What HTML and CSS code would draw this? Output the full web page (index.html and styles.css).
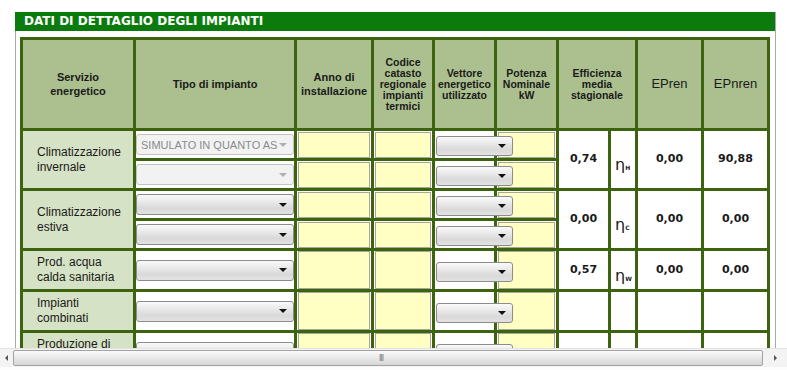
FILE: index.html
```html
<!DOCTYPE html>
<html lang="it">
<head>
  <meta charset="UTF-8">
  <title>Dati di dettaglio degli impianti</title>
  <link rel="stylesheet" href="styles.css">
</head>
<body>
  <div class="viewport">
    <div class="panel">
      <div class="panel-title">DATI DI DETTAGLIO DEGLI IMPIANTI</div>

      <table class="grid">
        <colgroup>
          <col style="width:113px">
          <col style="width:161px">
          <col style="width:77px">
          <col style="width:61px">
          <col style="width:62px">
          <col style="width:62px">
          <col style="width:52px">
          <col style="width:27px">
          <col style="width:66px">
          <col style="width:66px">
        </colgroup>
        <tr class="head">
          <th>Servizio<br>energetico</th>
          <th>Tipo di impianto</th>
          <th>Anno di<br>installazione</th>
          <th class="tight">Codice<br>catasto<br>regionale<br>impianti<br>termici</th>
          <th class="tight">Vettore<br>energetico<br>utilizzato</th>
          <th class="tight">Potenza<br>Nominale<br>kW</th>
          <th colspan="2" class="tight">Efficienza<br>media<br>stagionale</th>
          <th class="big">EPren</th>
          <th class="big">EPnren</th>
        </tr>

        <!-- climatizzazione invernale -->
        <tr class="sub">
          <td rowspan="2" class="service">Climatizzazione<br>invernale</td>
          <td class="tipo"><div class="dd off"><span class="dd-text">SIMULATO IN QUANTO AS</span><span class="dd-arrow"></span></div></td>
          <td class="field"><div class="inp"></div></td>
          <td class="field"><div class="inp"></div></td>
          <td class="vett"><div class="dd small"><span class="dd-text"></span><span class="dd-arrow"></span></div></td>
          <td class="field"><div class="inp"></div></td>
          <td rowspan="2" class="val">0,74</td>
          <td rowspan="2" class="eta">η<sub>H</sub></td>
          <td rowspan="2" class="val">0,00</td>
          <td rowspan="2" class="val">90,88</td>
        </tr>
        <tr class="sub">
          <td class="tipo"><div class="dd off"><span class="dd-text"></span><span class="dd-arrow"></span></div></td>
          <td class="field"><div class="inp"></div></td>
          <td class="field"><div class="inp"></div></td>
          <td class="vett"><div class="dd small"><span class="dd-text"></span><span class="dd-arrow"></span></div></td>
          <td class="field"><div class="inp"></div></td>
        </tr>

        <!-- climatizzazione estiva -->
        <tr class="sub">
          <td rowspan="2" class="service">Climatizzazione<br>estiva</td>
          <td class="tipo"><div class="dd"><span class="dd-text"></span><span class="dd-arrow"></span></div></td>
          <td class="field"><div class="inp"></div></td>
          <td class="field"><div class="inp"></div></td>
          <td class="vett"><div class="dd small"><span class="dd-text"></span><span class="dd-arrow"></span></div></td>
          <td class="field"><div class="inp"></div></td>
          <td rowspan="2" class="val">0,00</td>
          <td rowspan="2" class="eta">η<sub>C</sub></td>
          <td rowspan="2" class="val">0,00</td>
          <td rowspan="2" class="val">0,00</td>
        </tr>
        <tr class="sub sub-b">
          <td class="tipo"><div class="dd"><span class="dd-text"></span><span class="dd-arrow"></span></div></td>
          <td class="field"><div class="inp"></div></td>
          <td class="field"><div class="inp"></div></td>
          <td class="vett"><div class="dd small"><span class="dd-text"></span><span class="dd-arrow"></span></div></td>
          <td class="field"><div class="inp"></div></td>
        </tr>

        <!-- acqua calda sanitaria -->
        <tr class="single">
          <td class="service">Prod. acqua<br>calda sanitaria</td>
          <td class="tipo"><div class="dd"><span class="dd-text"></span><span class="dd-arrow"></span></div></td>
          <td class="field"><div class="inp"></div></td>
          <td class="field"><div class="inp"></div></td>
          <td class="vett"><div class="dd small"><span class="dd-text"></span><span class="dd-arrow"></span></div></td>
          <td class="field"><div class="inp"></div></td>
          <td class="val">0,57</td>
          <td class="eta">η<sub>W</sub></td>
          <td class="val">0,00</td>
          <td class="val">0,00</td>
        </tr>

        <!-- impianti combinati -->
        <tr class="single">
          <td class="service">Impianti<br>combinati</td>
          <td class="tipo"><div class="dd"><span class="dd-text"></span><span class="dd-arrow"></span></div></td>
          <td class="field"><div class="inp"></div></td>
          <td class="field"><div class="inp"></div></td>
          <td class="vett"><div class="dd small"><span class="dd-text"></span><span class="dd-arrow"></span></div></td>
          <td class="field"><div class="inp"></div></td>
          <td></td>
          <td></td>
          <td></td>
          <td></td>
        </tr>

        <!-- produzione energia elettrica -->
        <tr class="single">
          <td class="service">Produzione di<br>energia elettrica</td>
          <td class="tipo"><div class="dd"><span class="dd-text"></span><span class="dd-arrow"></span></div></td>
          <td class="field"><div class="inp"></div></td>
          <td class="field"><div class="inp"></div></td>
          <td class="vett"><div class="dd small"><span class="dd-text"></span><span class="dd-arrow"></span></div></td>
          <td class="field"><div class="inp"></div></td>
          <td></td>
          <td></td>
          <td></td>
          <td></td>
        </tr>
      </table>
    </div>
  </div>

  <div class="hscroll">
    <div class="hs-btn"><span class="tri-left"></span></div>
    <div class="hs-track">
      <div class="hs-thumb"><span class="grip">III</span></div>
    </div>
    <div class="hs-btn right"><span class="tri-right"></span></div>
  </div>
</body>
</html>
```

FILE: styles.css
```css
html, body {
  margin: 0;
  padding: 0;
  background: #fff;
  overflow: hidden;
}
body {
  width: 787px;
  height: 370px;
  font-family: "Liberation Sans", Arial, sans-serif;
  color: #1a1a1a;
}
.viewport {
  height: 348px;
  overflow: hidden;
  padding: 12px 0 0 15px;
  box-sizing: border-box;
}
.panel {
  width: 761px;
  min-height: 400px;
  box-sizing: border-box;
  border-left: 1px solid #a9a9a9;
  border-right: 1px solid #a9a9a9;
}
.panel-title {
  background: #0a7b0c;
  color: #fff;
  font-family: "DejaVu Sans", Verdana, sans-serif;
  font-weight: bold;
  font-size: 12px;
  height: 19px;
  line-height: 19px;
  padding-left: 9px;
  margin-left: -1px;
}

.grid {
  table-layout: fixed;
  border-collapse: collapse;
  width: 749px;
  margin: 6px 0 0 4px;
}
.grid th,
.grid td {
  border: 3px solid #3c6410;
  padding: 0;
  overflow: visible;
}
.grid th {
  background: #abc08e;
  font-size: 11px;
  line-height: 14px;
  font-weight: bold;
  text-align: center;
  vertical-align: middle;
}
.grid th.tight {
  font-size: 10.5px;
  line-height: 11px;
}
.grid th.big {
  font-size: 13px;
  font-weight: normal;
}
.grid tr.head { height: 91px; }
.grid tr.sub { height: 30px; }
.grid tr.sub-b { height: 29px; }
.grid tr.single { height: 40px; }

.grid td.service {
  background: #d6e2c5;
  font-size: 12px;
  line-height: 15px;
  padding-left: 14px;
  vertical-align: middle;
}
.grid td.tipo { padding: 0; }
.grid td.vett { padding-left: 1px; }
.grid td.field { padding: 1px 1px 0 1px; vertical-align: top; }
.grid tr.single td.field { padding: 0 1px; vertical-align: middle; }

.inp {
  height: 24px;
  border: 1px solid #a6a69a;
  background: #ffffc4;
}
tr.single .inp { height: 36px; }

.dd {
  position: relative;
  z-index: 1;
  display: flex;
  align-items: center;
  justify-content: space-between;
  height: 21px;
  box-sizing: border-box;
  border: 1px solid #8c8c8c;
  border-radius: 3px;
  background: linear-gradient(#fafafa, #d9d9d9 70%, #e2e2e2);
  padding: 0 6px 0 4px;
  margin: 2px 0;
}
.dd.off {
  border-color: #c2c2c2;
  background: #f2f2f2;
}
.dd.small {
  width: 77px;
  height: 20px;
  margin: 3px 0 0;
}
.dd-text {
  font-family: "Liberation Sans", Arial, sans-serif;
  font-size: 11px;
  color: #8a8a8a;
  white-space: nowrap;
}
.dd-arrow {
  flex: none;
  width: 0;
  height: 0;
  border-left: 4px solid transparent;
  border-right: 4px solid transparent;
  border-top: 4px solid #111;
}
.dd.off .dd-arrow { border-top-color: #b0b0b0; }

.grid td.val {
  text-align: center;
  vertical-align: middle;
  font-family: "DejaVu Sans", Verdana, sans-serif;
  font-weight: bold;
  font-size: 11px;
  padding-bottom: 2px;
}
.grid td.eta {
  vertical-align: middle;
  padding: 10px 0 0 4px;
  font-family: "DejaVu Sans", sans-serif;
  font-size: 16px;
  color: #222;
}
.eta sub {
  font-size: 6px;
  font-weight: bold;
  vertical-align: 0;
}

.hscroll {
  display: flex;
  height: 18px;
  background: #f3f3f3;
  border-top: 1px solid #e4e4e4;
  border-bottom: 3px solid #fdfdfd;
}
.hs-btn {
  width: 13px;
  display: flex;
  align-items: center;
  justify-content: center;
}
.hs-btn.right { width: 24px; }
.hs-track {
  flex: 1;
  display: flex;
}
.hs-thumb {
  flex: 1;
  margin: 1px 0;
  border: 1px solid #a2a2a2;
  border-radius: 2px;
  background: linear-gradient(#fbfbfb, #e6e6e6 55%, #d6d6d6);
  display: flex;
  align-items: center;
  justify-content: center;
}
.grip {
  font-family: "DejaVu Sans", sans-serif;
  font-size: 8px;
  color: #777;
  letter-spacing: -1px;
  margin-right: 14px;
}
.tri-left {
  width: 0;
  height: 0;
  border-top: 3px solid transparent;
  border-bottom: 3px solid transparent;
  border-right: 3px solid #555;
}
.tri-right {
  width: 0;
  height: 0;
  border-top: 3px solid transparent;
  border-bottom: 3px solid transparent;
  border-left: 3px solid #555;
}
```
